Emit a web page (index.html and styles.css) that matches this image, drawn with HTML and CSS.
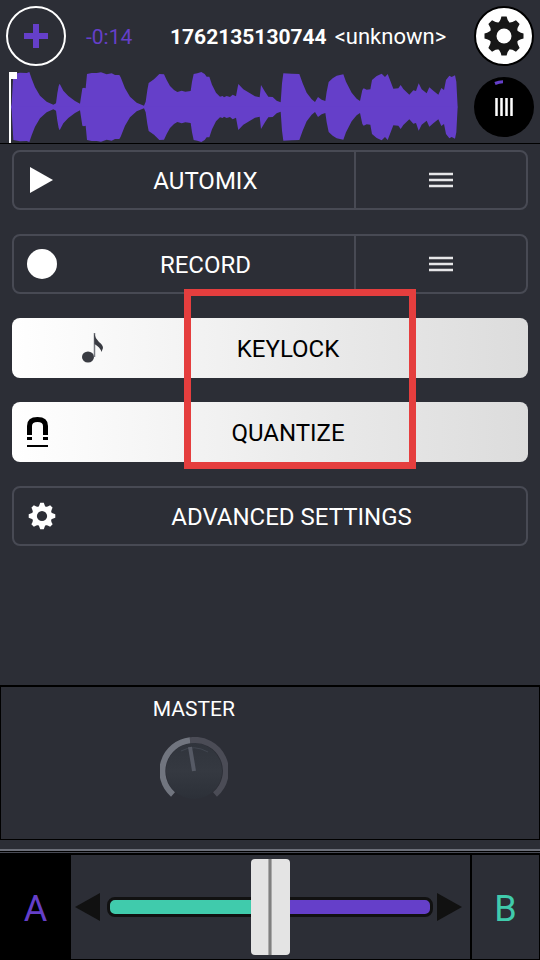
FILE: index.html
```html
<!DOCTYPE html>
<html lang="en">
<head>
<meta charset="utf-8">
<meta name="viewport" content="width=device-width, initial-scale=1">
<title>DJ Mixer</title>
<link rel="stylesheet" href="styles.css">
</head>
<body>
<header class="deck">
  <div class="deck-main">
    <div class="track">
      <button class="round add" aria-label="Add track">
        <svg width="24" height="24" viewBox="0 0 24 24"><path d="M9 0h6v9h9v6h-9v9H9v-9H0V9h9z" fill="#653fc9"/></svg>
      </button>
      <span class="time">-0:14</span>
      <p class="title"><strong>1762135130744</strong><span class="artist">&lt;unknown&gt;</span></p>
    </div>
    <svg class="wave" viewBox="27 216 1350 213" preserveAspectRatio="none">
      <defs>
        <path id="half" d="M33 322L35 310L40 222L60 218L80 219L88 216L95 236L105 262L120 287L140 305L160 314L168 310L172 280L176 258L179 251L190 272L205 288L225 303L240 311L247 265L252 263L257 265L261 222L275 219L290 219L303 217L320 223L335 220L345 225L358 225L362 232L375 265L390 290L410 308L432 317L437 305L442 270L446 249L462 238L478 222L492 223L500 240L510 258L522 270L532 276L545 272L556 275L572 273L576 245L581 222L592 220L604 216L614 222L620 230L628 230L636 254L648 278L660 290L668 288L672 292L680 288L690 291L698 284L708 289L713 262L715 252L730 268L750 280L765 289L779 292L783 255L795 275L805 290L818 291L830 302L842 307L846 250L850 220L875 221L898 222L908 250L920 278L935 298L945 306L954 291L965 299L976 303L980 275L986 246L998 235L1010 227L1030 223L1038 245L1055 278L1070 296L1080 303L1087 270L1091 265L1100 269L1111 268L1116 240L1130 228L1145 221L1155 231L1163 222L1172 245L1180 266L1195 265L1202 255L1210 267L1228 284L1240 271L1248 273L1256 250L1265 268L1280 280L1288 262L1300 272L1315 284L1324 264L1332 270L1338 240L1348 227L1355 231L1365 226L1369 245L1373 322z" fill="#653fc9"/>
      </defs>
      <use href="#half"/>
      <use href="#half" transform="translate(0 642) scale(1 -1)"/>
      <path d="M27 216h24v21H33v192h-6z" fill="#fff"/>
    </svg>
  </div>
  <div class="deck-side">
    <button class="round settings" aria-label="Settings">
      <svg width="40" height="40" viewBox="-20 -20 40 40">
        <g fill="#171717">
          <path id="teeth" d="M-8 -11Q-3.500 -14 -2.600 -19.500H2.600Q3.500 -14 8 -11V11Q3.500 14 2.600 19.500H-2.600Q-3.500 14 -8 11z"/>
          <use href="#teeth" transform="rotate(45)"/>
          <use href="#teeth" transform="rotate(90)"/>
          <use href="#teeth" transform="rotate(135)"/>
          <circle r="13.500"/>
        </g>
        <circle r="7.500" fill="#fff"/>
      </svg>
    </button>
    <button class="round jog" aria-label="Jog wheel">
      <svg width="60" height="60" viewBox="0 0 60 60">
        <path d="M21 6.500Q25 4.800 29 4.800" fill="none" stroke="#653fc9" stroke-width="3"/>
        <path d="M22.500 21v18M27.500 21v18M32.500 21v18M37.500 21v18" stroke="#fff" stroke-width="2.500"/>
      </svg>
    </button>
  </div>
</header>

<main class="menu">
  <div class="split">
    <button class="row">
      <svg class="icon" width="30" height="30" viewBox="0 0 30 30"><path d="M3 2l23 13L3 28z" fill="#fff"/></svg>
      <span class="label">AUTOMIX</span>
    </button>
    <button class="more" aria-label="Automix options">
      <svg width="24" height="18" viewBox="0 0 24 18"><path d="M0 3h24M0 9h24M0 15h24" stroke="#e6e6e8" stroke-width="2.500"/></svg>
    </button>
  </div>
  <div class="split">
    <button class="row">
      <svg class="icon" width="30" height="30" viewBox="0 0 30 30"><circle cx="15" cy="15" r="15" fill="#fff"/></svg>
      <span class="label">RECORD</span>
    </button>
    <button class="more" aria-label="Record options">
      <svg width="24" height="18" viewBox="0 0 24 18"><path d="M0 3h24M0 9h24M0 15h24" stroke="#e6e6e8" stroke-width="2.500"/></svg>
    </button>
  </div>
  <div class="toggles">
    <button class="toggle" aria-pressed="true">
      <svg class="icon note" width="22" height="30" viewBox="0 0 22 30">
        <ellipse cx="6" cy="24" rx="6" ry="5.500" fill="#393b42"/>
        <path d="M12.500 0v24" stroke="#777980" stroke-width="1.500"/>
        <path d="M12 0Q13 5 17 9Q21 12 21 15L19.500 19Q18 14 12.500 11z" fill="#393b42"/>
      </svg>
      <span class="label">KEYLOCK</span>
    </button>
    <button class="toggle" aria-pressed="true">
      <svg class="icon" width="21" height="30" viewBox="0 0 21 30">
        <path d="M2.500 18V9Q2.500 2.500 10.500 2.500T18.500 9V18" fill="none" stroke="#000" stroke-width="5"/>
        <path d="M0 20h5v3H0zM16 20h5v3h-5zM0 28h21v2H0z"/>
      </svg>
      <span class="label">QUANTIZE</span>
    </button>
    <div class="highlight"></div>
  </div>
  <div class="split">
    <button class="row">
      <svg class="icon" width="30" height="30" viewBox="-22 -22 44 44">
        <g fill="#fff">
          <use href="#teeth"/>
          <use href="#teeth" transform="rotate(45)"/>
          <use href="#teeth" transform="rotate(90)"/>
          <use href="#teeth" transform="rotate(135)"/>
          <circle r="14"/>
        </g>
        <circle r="7.500" fill="#2c2e36"/>
      </svg>
      <span class="label">ADVANCED SETTINGS</span>
    </button>
  </div>
</main>

<section class="master">
  <div class="knob">
    <span>MASTER</span>
    <svg width="68" height="68" viewBox="-34 -34 68 68">
      <defs>
        <linearGradient id="face" x1="0" y1="0" x2="0" y2="1">
          <stop offset="0" stop-color="#30343c"/>
          <stop offset=".5" stop-color="#353941"/>
          <stop offset="1" stop-color="#2c3038"/>
        </linearGradient>
      </defs>
      <circle r="28" fill="url(#face)"/>
      <path d="M-4 -30.700A31 31 0 0 1 21 23.500" fill="none" stroke="#4b4c56" stroke-width="6"/>
      <path d="M-21 23.500A31 31 0 0 1 -4 -30.700" fill="none" stroke="#71757f" stroke-width="6"/>
      <path d="M-13 -20Q0 -27 14 -19" fill="none" stroke="#414650" stroke-width="1"/>
      <path d="M-4 -24L0 0" stroke="#565a65" stroke-width="4"/>
    </svg>
  </div>
</section>

<footer class="mixer">
  <button class="side side-a">A</button>
  <div class="fader">
    <svg width="25" height="28" viewBox="0 0 25 28"><path d="M25 0v28L0 14z" fill="#111"/></svg>
    <input type="range" min="0" max="100" value="50" aria-label="Crossfader">
    <svg width="25" height="28" viewBox="0 0 25 28"><path d="M0 0v28l25-14z" fill="#111"/></svg>
  </div>
  <button class="side side-b">B</button>
</footer>
</body>
</html>
```

FILE: styles.css
```css
* {
  box-sizing: border-box;
}

body {
  margin: 0;
  min-height: 100vh;
  display: flex;
  flex-direction: column;
  background: #2c2e36;
  color: #fff;
  font: 21px/24px Roboto, sans-serif;
}

button {
  margin: 0;
  padding: 0;
  border: 0;
  background: none;
  color: inherit;
  font: inherit;
}

svg {
  display: block;
  flex: none;
}

.deck {
  display: flex;
  border-bottom: 1px solid #000;
}

.deck-main {
  flex: 1;
  min-width: 0;
}

.track {
  display: flex;
  align-items: center;
  height: 72px;
  padding-left: 6px;
}

.wave {
  width: calc(100% - 17px);
  height: 71px;
  margin-left: 9px;
}

.round {
  display: flex;
  align-items: center;
  justify-content: center;
  flex: none;
  width: 60px;
  height: 60px;
  border-radius: 50%;
}

.add {
  border: 2px solid #fff;
}

.time {
  width: 64px;
  margin-left: 20px;
  padding-top: 2px;
  color: #653fc9;
}

.title {
  display: flex;
  gap: 8px;
  margin: 0 0 0 20px;
  padding-top: 2px;
  white-space: nowrap;
}

.artist {
  font-size: 22px;
}

.deck-side {
  display: flex;
  flex-direction: column;
  gap: 11px;
  padding: 6px 6px 0 7px;
}

.settings {
  border: 2px solid #000;
  background: #fff;
}

.jog {
  background: #000;
}

.menu {
  flex: 1;
  display: flex;
  flex-direction: column;
  gap: 24px;
  padding: 6px 12px;
  font-size: 24px;
}

.split {
  display: flex;
  height: 60px;
  border: 2px solid #484a54;
  border-radius: 8px;
}

.row {
  flex: 1;
  display: flex;
  align-items: center;
  padding-left: 13px;
}

.label {
  flex: 1;
  padding-top: 2px;
  text-align: center;
}

.more {
  width: 33.600%;
  display: flex;
  align-items: center;
  justify-content: center;
  border-left: 2px solid #484a54;
}

.toggles {
  position: relative;
  display: flex;
  flex-direction: column;
  gap: 24px;
}

.toggle {
  display: grid;
  grid-template-columns: 36px 1fr;
  align-items: center;
  height: 60px;
  border-radius: 8px;
  background: linear-gradient(90deg, #fff, #dcdcdc);
  color: #000;
}

.toggle .icon {
  grid-area: 1 / 1 / 2 / 3;
  margin-left: 15px;
}

.toggle .note {
  margin-left: 70px;
}

.toggle .label {
  grid-area: 1 / 2;
}

.highlight {
  position: absolute;
  inset: -29px 21.800% -7px 33.333%;
  border: 7px solid #e53e3e;
  pointer-events: none;
}

.master {
  height: 155px;
  padding-top: 10px;
  border: 1px solid #000;
  border-top-width: 2px;
}

.knob {
  display: flex;
  flex-direction: column;
  align-items: center;
  gap: 16px;
  width: 71.700%;
}

.mixer {
  display: flex;
  height: 111px;
  margin-top: 9px;
  padding-top: 4px;
  border-top: 2px solid #6b6e78;
  border-bottom: 1px solid #000;
  background: linear-gradient(#000 1px, #484a54 1px, #484a54 2px, #000 2px, #000 4px, #2c2e36 4px);
}

.side {
  width: 71px;
  padding-top: 4px;
  font-size: 36px;
  line-height: 40px;
}

.side-a {
  background: #000;
  color: #653fc9;
}

.side-b {
  width: 70px;
  border: solid #000;
  border-width: 0 1px 0 2px;
  color: #40cbac;
}

.fader {
  flex: 1;
  display: flex;
  align-items: center;
  gap: 4px;
  padding: 0 8px 0 4px;
}

.fader input {
  flex: 1;
  min-width: 0;
  height: 20px;
  margin: 0 0 0 3px;
  border: 3px solid #111;
  border-radius: 8px;
  background: linear-gradient(90deg, #40cbac 50%, #653fc9 50%);
  appearance: none;
}

.fader input::-webkit-slider-thumb {
  appearance: none;
  width: 39px;
  height: 96px;
  border-radius: 4px;
  background: linear-gradient(90deg, #e4e4e4 17px, #aaa 17px, #aaa 18px, #808080 18px, #808080 20px, #aaa 20px, #aaa 21px, #e4e4e4 21px);
}
```
